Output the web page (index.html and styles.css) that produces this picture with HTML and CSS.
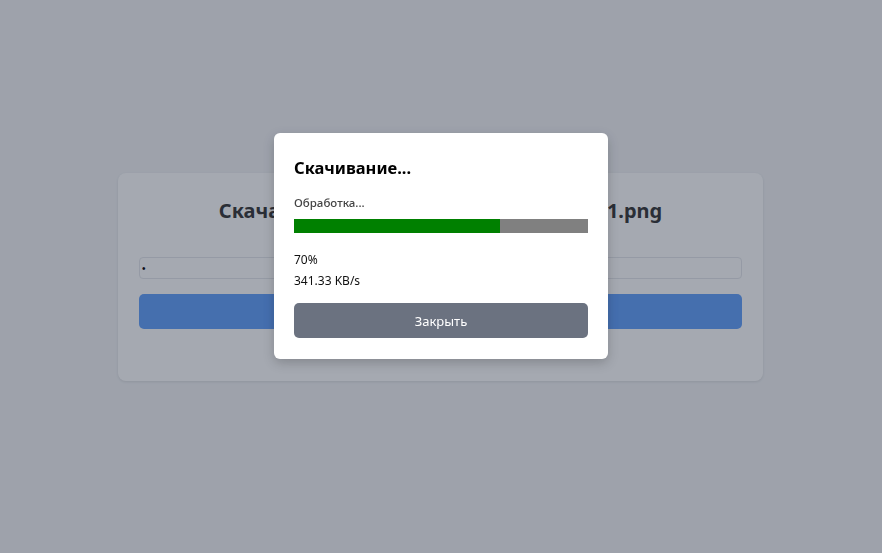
FILE: index.html
```html
<!DOCTYPE html>
<html lang="ru">
<head>
<meta charset="utf-8">
<link rel="stylesheet" href="styles.css">
</head>
<body>
<main class="page">
  <section class="card">
    <h1 class="card-title">Скачать screenshot_2024_05_14_10_0101.png</h1>
    <input class="card-input" type="password" value="x">
    <button class="card-btn" type="button"></button>
  </section>
</main>
<div class="overlay">
  <div class="modal">
    <h2 class="modal-title">Скачивание...</h2>
    <div class="modal-status">Обработка...</div>
    <div class="progress"><div class="progress-fill" style="width:70%"></div></div>
    <div class="modal-info">
      <div>70%</div>
      <div>341.33 KB/s</div>
    </div>
    <button class="modal-btn" type="button">Закрыть</button>
  </div>
</div>
</body>
</html>
```
FILE: styles.css
```css
* { box-sizing: border-box; }
html, body { margin: 0; height: 100%; }
body {
  background: #f3f4f6;
  font-family: "Noto Sans", "Open Sans", sans-serif;
  color: #111827;
}
.page {
  display: flex;
  justify-content: center;
  padding-top: 173px;
  padding-right: 1px;
}
.card {
  width: 645px;
  background: #fff;
  border-radius: 8px;
  padding: 24px 21px 52px;
  display: flex;
  flex-direction: column;
  box-shadow: 0 1px 3px rgba(0,0,0,0.1);
}
.card-title {
  margin: 0 0 32px;
  font-size: 20px;
  line-height: 28px;
  font-weight: 700;
  text-align: center;
  color: #333;
}
.card-input {
  height: 22px;
  border: 1px solid #e5e7eb;
  border-radius: 4px;
  padding: 0 2px;
  font-size: 10px;
  margin: 0 0 15px;
}
.card-btn {
  height: 35px;
  border: 0;
  border-radius: 5px;
  background: #5f9efb;
}
.overlay {
  position: fixed;
  inset: 0;
  background: rgba(30, 41, 59, 0.4);
  display: flex;
  justify-content: center;
  padding-top: 133px;
  align-items: flex-start;
}
.modal {
  width: 334px;
  background: #fff;
  border-radius: 6px;
  padding: 20px 20px 21px;
  box-shadow: 0 4px 12px rgba(0,0,0,0.2);
  display: flex;
  flex-direction: column;
}
.modal-title {
  margin: 0 0 12px;
  font-size: 16.5px;
  line-height: 30px;
  font-weight: 700;
  color: #000;
}
.modal-status {
  font-size: 11.5px;
  font-weight: 500;
  line-height: 16px;
  color: #444;
  margin-bottom: 8px;
}
.progress {
  height: 14px;
  background: #808080;
  margin-bottom: 16px;
}
.progress-fill {
  height: 100%;
  background: #008000;
}
.modal-info {
  font-size: 12px;
  line-height: 21px;
  color: #111;
  margin-bottom: 12px;
}
.modal-btn {
  height: 35px;
  border: 0;
  border-radius: 5px;
  background: #6b7280;
  color: #fff;
  font-family: inherit;
  font-size: 13px;
}
```
